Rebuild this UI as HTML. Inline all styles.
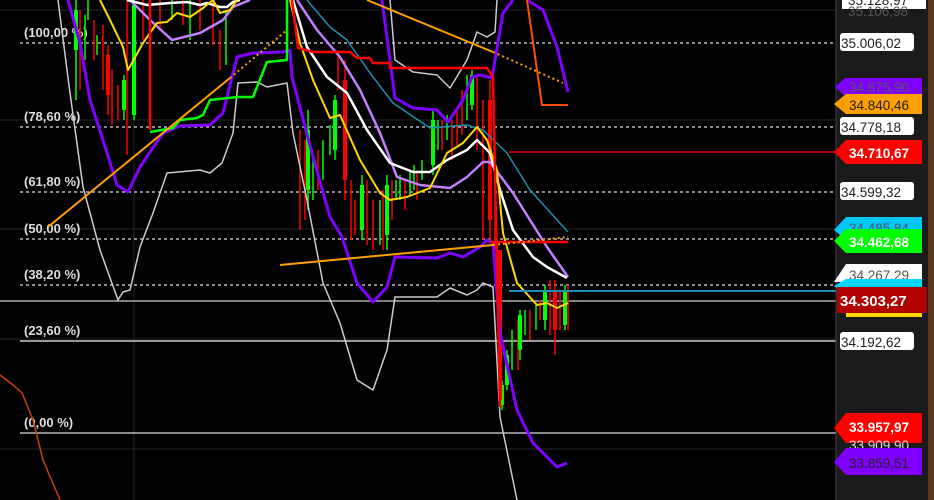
<!DOCTYPE html>
<html><head><meta charset="utf-8"><style>
html,body{margin:0;padding:0;background:#000;}
svg{display:block;font-family:"Liberation Sans",sans-serif;}
</style></head><body>
<svg width="934" height="500" viewBox="0 0 934 500" xmlns="http://www.w3.org/2000/svg">
<rect width="934" height="500" fill="#000"/>
<g stroke="#262626" stroke-width="1">
<line x1="0" y1="10" x2="836" y2="10"/><line x1="0" y1="120" x2="836" y2="120"/>
<line x1="0" y1="229" x2="836" y2="229"/><line x1="0" y1="339" x2="836" y2="339"/>
<line x1="0" y1="449" x2="836" y2="449"/><line x1="134" y1="0" x2="134" y2="500"/>
</g>
<g stroke="#ddd" stroke-width="1.3" stroke-dasharray="3,3">
<line x1="20" y1="43" x2="836" y2="43"/><line x1="20" y1="127" x2="836" y2="127"/>
<line x1="20" y1="192" x2="836" y2="192"/><line x1="20" y1="239" x2="836" y2="239"/>
<line x1="20" y1="285" x2="836" y2="285"/>
</g>
<line x1="0" y1="301" x2="836" y2="301" stroke="#aaa" stroke-width="1.5"/>
<line x1="20" y1="341" x2="836" y2="341" stroke="#ccc" stroke-width="1.5"/>
<line x1="20" y1="433" x2="836" y2="433" stroke="#ddd" stroke-width="1.3"/>
<g fill="#ddd" font-size="13" font-weight="bold">
<text x="24" y="37">(100,00 %)</text><text x="24" y="121">(78,60 %)</text>
<text x="24" y="186">(61,80 %)</text><text x="24" y="233">(50,00 %)</text>
<text x="24" y="279">(38,20 %)</text><text x="24" y="335">(23,60 %)</text>
<text x="24" y="427">(0,00 %)</text>
</g>
<polyline fill="none" stroke="#c84000" stroke-width="1.5" points="0,375 13,385 22,393 33,420 43,460 60,500"/>
<g stroke-width="1.5">
<g stroke="#f00">
<line x1="80" y1="10" x2="80" y2="90"/><line x1="94" y1="20" x2="94" y2="60"/><line x1="103" y1="25" x2="103" y2="90"/>
<line x1="108" y1="45" x2="108" y2="115"/><line x1="112" y1="70" x2="112" y2="125"/><line x1="118" y1="85" x2="118" y2="120"/>
<line x1="127" y1="0" x2="127" y2="155"/><line x1="143" y1="0" x2="143" y2="40"/><line x1="160" y1="0" x2="160" y2="30"/>
<line x1="183" y1="0" x2="183" y2="25"/><line x1="200" y1="0" x2="200" y2="30"/><line x1="213" y1="0" x2="213" y2="45"/>
<line x1="220" y1="30" x2="220" y2="70"/>
<line x1="300" y1="130" x2="300" y2="230"/><line x1="305" y1="140" x2="305" y2="220"/><line x1="318" y1="150" x2="318" y2="190"/>
<line x1="338" y1="55" x2="338" y2="90"/><line x1="345" y1="60" x2="345" y2="200"/><line x1="351" y1="180" x2="351" y2="240"/>
<line x1="355" y1="200" x2="355" y2="235"/><line x1="367" y1="180" x2="367" y2="245"/><line x1="373" y1="200" x2="373" y2="250"/>
<line x1="383" y1="190" x2="383" y2="250"/><line x1="392" y1="180" x2="392" y2="220"/><line x1="405" y1="180" x2="405" y2="210"/>
<line x1="417" y1="170" x2="417" y2="200"/><line x1="442" y1="120" x2="442" y2="150"/><line x1="452" y1="120" x2="452" y2="160"/>
<line x1="457" y1="110" x2="457" y2="145"/><line x1="462" y1="90" x2="462" y2="135"/><line x1="477" y1="75" x2="477" y2="150"/>
<line x1="483" y1="100" x2="483" y2="240"/><line x1="490" y1="80" x2="490" y2="240"/><line x1="495" y1="200" x2="495" y2="250"/>
<line x1="518" y1="320" x2="518" y2="370"/><line x1="530" y1="310" x2="530" y2="340"/><line x1="540" y1="300" x2="540" y2="320"/>
<line x1="550" y1="280" x2="550" y2="335"/><line x1="555" y1="280" x2="555" y2="355"/><line x1="560" y1="290" x2="560" y2="330"/>
<line x1="568" y1="285" x2="568" y2="330"/>
</g>
<g stroke="#0f0">
<line x1="76" y1="0" x2="76" y2="100"/><line x1="85" y1="15" x2="85" y2="60"/><line x1="88" y1="0" x2="88" y2="20"/>
<line x1="97" y1="35" x2="97" y2="55"/><line x1="124" y1="75" x2="124" y2="120"/><line x1="134" y1="0" x2="134" y2="120"/>
<line x1="172" y1="0" x2="172" y2="20"/><line x1="190" y1="0" x2="190" y2="40"/><line x1="226" y1="10" x2="226" y2="65"/>
<line x1="308" y1="110" x2="308" y2="210"/><line x1="313" y1="160" x2="313" y2="200"/><line x1="323" y1="140" x2="323" y2="180"/>
<line x1="330" y1="125" x2="330" y2="155"/><line x1="335" y1="95" x2="335" y2="160"/><line x1="362" y1="175" x2="362" y2="240"/>
<line x1="380" y1="200" x2="380" y2="245"/><line x1="387" y1="175" x2="387" y2="250"/><line x1="396" y1="180" x2="396" y2="200"/>
<line x1="400" y1="175" x2="400" y2="200"/><line x1="410" y1="170" x2="410" y2="195"/><line x1="414" y1="165" x2="414" y2="190"/>
<line x1="422" y1="160" x2="422" y2="180"/><line x1="433" y1="110" x2="433" y2="175"/><line x1="438" y1="120" x2="438" y2="150"/>
<line x1="447" y1="115" x2="447" y2="140"/><line x1="467" y1="75" x2="467" y2="120"/><line x1="472" y1="70" x2="472" y2="110"/>
<line x1="502" y1="380" x2="502" y2="410"/><line x1="507" y1="350" x2="507" y2="390"/><line x1="512" y1="330" x2="512" y2="370"/>
<line x1="520" y1="310" x2="520" y2="360"/><line x1="525" y1="310" x2="525" y2="335"/><line x1="536" y1="305" x2="536" y2="330"/>
<line x1="545" y1="285" x2="545" y2="330"/><line x1="565" y1="285" x2="565" y2="330"/>
</g>
<g fill="#0f0">
<rect x="74" y="10" width="4" height="40"/><rect x="122" y="80" width="4" height="30"/><rect x="132" y="5" width="4" height="110"/>
<rect x="306" y="130" width="4" height="60"/><rect x="333" y="100" width="4" height="50"/><rect x="360" y="185" width="4" height="45"/>
<rect x="385" y="185" width="4" height="50"/><rect x="431" y="120" width="4" height="45"/><rect x="470" y="75" width="4" height="30"/>
<rect x="500" y="385" width="4" height="20"/><rect x="505" y="355" width="4" height="30"/><rect x="518" y="315" width="4" height="35"/>
<rect x="543" y="290" width="4" height="30"/><rect x="563" y="290" width="4" height="35"/>
</g>
<g fill="#f00">
<rect x="106" y="55" width="4" height="40"/><rect x="343" y="80" width="4" height="100"/><rect x="488" y="100" width="4" height="120"/>
<rect x="498" y="250" width="4" height="150"/><rect x="553" y="290" width="4" height="40"/>
</g>
</g>
<g fill="none" stroke-linejoin="round">
<polyline stroke="#ccc" stroke-width="1.5" points="58,0 70,93 83,187 100,250 118,300 123,292 130,290 140,247 153,213 167,173 200,170 210,173 222,163 233,133 238,83 257,82 267,87 287,83 293,133 307,200 323,283 340,323 357,380 373,390 387,350 395,297 437,297 450,288 467,295 477,290 483,283 493,287 500,417 517,500"/>
<polyline stroke="#ccc" stroke-width="1.5" points="390,0 395,60 413,72 437,75 450,88 467,60 477,32 487,37 495,32 497,0"/>
<polyline stroke="#8000ff" stroke-width="3" points="68,0 80,43 90,100 103,140 117,185 128,192 140,167 150,152 163,133 180,126 210,125 223,113 237,57 253,53 283,52 290,50 292,77 313,157 330,217 342,237 357,283 373,302 387,287 395,257 437,258 450,253 463,257 480,247 487,240 493,243 500,333 517,410 533,443 557,467 567,463"/>
<polyline stroke="#8000ff" stroke-width="3" points="382,0 395,98 413,108 437,110 448,122 463,100 472,77 480,75 492,78 503,13 513,0"/>
<polyline stroke="#8000ff" stroke-width="3" points="527,0 543,10 557,47 568,92"/>
<polyline stroke="#1890b0" stroke-width="1.5" points="307,0 330,27 347,40 370,73 393,103 430,128 467,125 483,130 507,153 530,190 568,232"/>
<polyline stroke="#c080ff" stroke-width="2.5" points="130,0 150,20 172,40 200,33 223,20 233,7 250,0"/>
<polyline stroke="#c080ff" stroke-width="2.5" points="297,0 317,30 340,57 360,90 380,133 397,177 420,185 450,188 467,177 483,162 490,162 513,193 547,247 568,277"/>
<polyline stroke="#fff" stroke-width="2.5" points="127,0 147,5 170,3 187,2 200,5 207,3 220,7 227,7 233,2 240,0"/>
<polyline stroke="#fff" stroke-width="2.5" points="293,0 307,47 327,77 347,93 367,130 390,163 413,172 430,172 447,160 467,150 477,140 490,153 500,190 513,230 533,257 547,267 567,278"/>
<polyline stroke="#ffd800" stroke-width="2" points="100,0 110,20 123,47 128,70 143,43 157,23 167,22 177,13 190,17 203,8 213,0 220,13 230,10 237,0"/>
<polyline stroke="#ffd800" stroke-width="2" points="290,0 300,43 313,80 330,118 340,115 360,160 380,193 390,200 407,197 430,188 447,153 463,143 477,127 487,140 497,170 503,233 517,283 537,305 547,303 557,308 568,303"/>
<polyline stroke="#0f0" stroke-width="2.5" points="150,132 173,128 180,120 197,118 203,115 210,100 237,97 253,97 267,62 287,60 287,0"/>
<polyline stroke="#f00" stroke-width="2.5" points="150,0 150,130"/>
<polyline stroke="#f00" stroke-width="2.5" points="292,0 298,48 313,52 350,52 357,58 370,58 373,63 390,63 390,68 487,68 493,77 500,407"/>
<line x1="490" y1="242" x2="568" y2="242" stroke="#f00" stroke-width="2.5"/>
<line x1="509" y1="152" x2="836" y2="152" stroke="#a00" stroke-width="2"/>
<line x1="509" y1="291" x2="836" y2="291" stroke="#1890b0" stroke-width="2"/>
<line x1="48" y1="227" x2="230" y2="78" stroke="#ffa000" stroke-width="2"/>
<line x1="230" y1="78" x2="287" y2="30" stroke="#ffa000" stroke-width="2" stroke-dasharray="2,3"/>
<line x1="367" y1="0" x2="493" y2="52" stroke="#ffa000" stroke-width="2"/>
<line x1="493" y1="52" x2="563" y2="83" stroke="#ffa000" stroke-width="2" stroke-dasharray="2,3"/>
<line x1="280" y1="265" x2="493" y2="245" stroke="#ffa000" stroke-width="2"/>
<line x1="493" y1="245" x2="568" y2="237" stroke="#ffa000" stroke-width="2" stroke-dasharray="2,3"/>
<polyline stroke="#ff5000" stroke-width="2" points="527,0 542,105 568,105"/>
</g>
<rect x="836" y="0" width="92" height="500" fill="#1a1a1a"/>
<line x1="836" y1="0" x2="836" y2="500" stroke="#444" stroke-width="1"/>
<rect x="928" y="0" width="6" height="500" fill="#5a3a20"/>
<g font-size="13.5">
<polygon points="842,-8 926,-8 926,9 842,9" fill="#fff"/><text x="848" y="5" fill="#222">35.128,97</text>
<text x="848" y="16" fill="#555">35.106,98</text>
<rect x="840" y="33" width="74" height="18" rx="3" fill="#fff"/><text x="841" y="48" fill="#222">35.006,02</text>
<polygon points="835,87 845,78 922,78 922,96 845,96" fill="#8000ff"/><text x="849" y="92" fill="#555">34.875,90</text>
<polygon points="834,104 846,94 922,94 922,114 846,114" fill="#ffa000"/><text x="849" y="110" fill="#222">34.840,46</text>
<rect x="840" y="117" width="74" height="18" rx="3" fill="#fff"/><text x="841" y="132" fill="#222">34.778,18</text>
<polygon points="834,152 846,140 922,140 922,164 846,164" fill="#f00"/><text x="849" y="158" fill="#fff" font-weight="bold">34.710,67</text>
<rect x="840" y="182" width="74" height="18" rx="3" fill="#fff"/><text x="841" y="197" fill="#222">34.599,32</text>
<polygon points="834,230 846,217 922,217 922,240 846,240" fill="#00c8ff"/><text x="849" y="233" fill="#555">34.485,84</text>
<polygon points="834,241 846,229 922,229 922,253 846,253" fill="#0f0"/><text x="849" y="247" fill="#fff" font-weight="bold">34.462,68</text>
<polygon points="834,282 846,264 922,264 922,282" fill="#fff"/><text x="849" y="280" fill="#555">34.267,29</text>
<polygon points="834,286 846,279 922,279 922,295 846,295" fill="#00d8ff"/>
<rect x="846" y="313" width="76" height="4" fill="#ffd800"/>
<rect x="837" y="287" width="90" height="26" fill="#b00000"/><text x="840" y="306" fill="#fff" font-weight="bold" font-size="15">34.303,27</text>
<rect x="840" y="332" width="74" height="18" rx="3" fill="#fff"/><text x="841" y="347" fill="#222">34.192,62</text>
<polygon points="834,428 846,413 922,413 922,443 846,443" fill="#f00"/><text x="849" y="432" fill="#fff" font-weight="bold">33.957,97</text>
<text x="849" y="450" fill="#ddd">33.909,90</text>
<polygon points="834,462 846,448 922,448 922,475 846,475" fill="#8000ff"/><text x="849" y="468" fill="#222">33.859,51</text>
</g>
</svg>
</body></html>
